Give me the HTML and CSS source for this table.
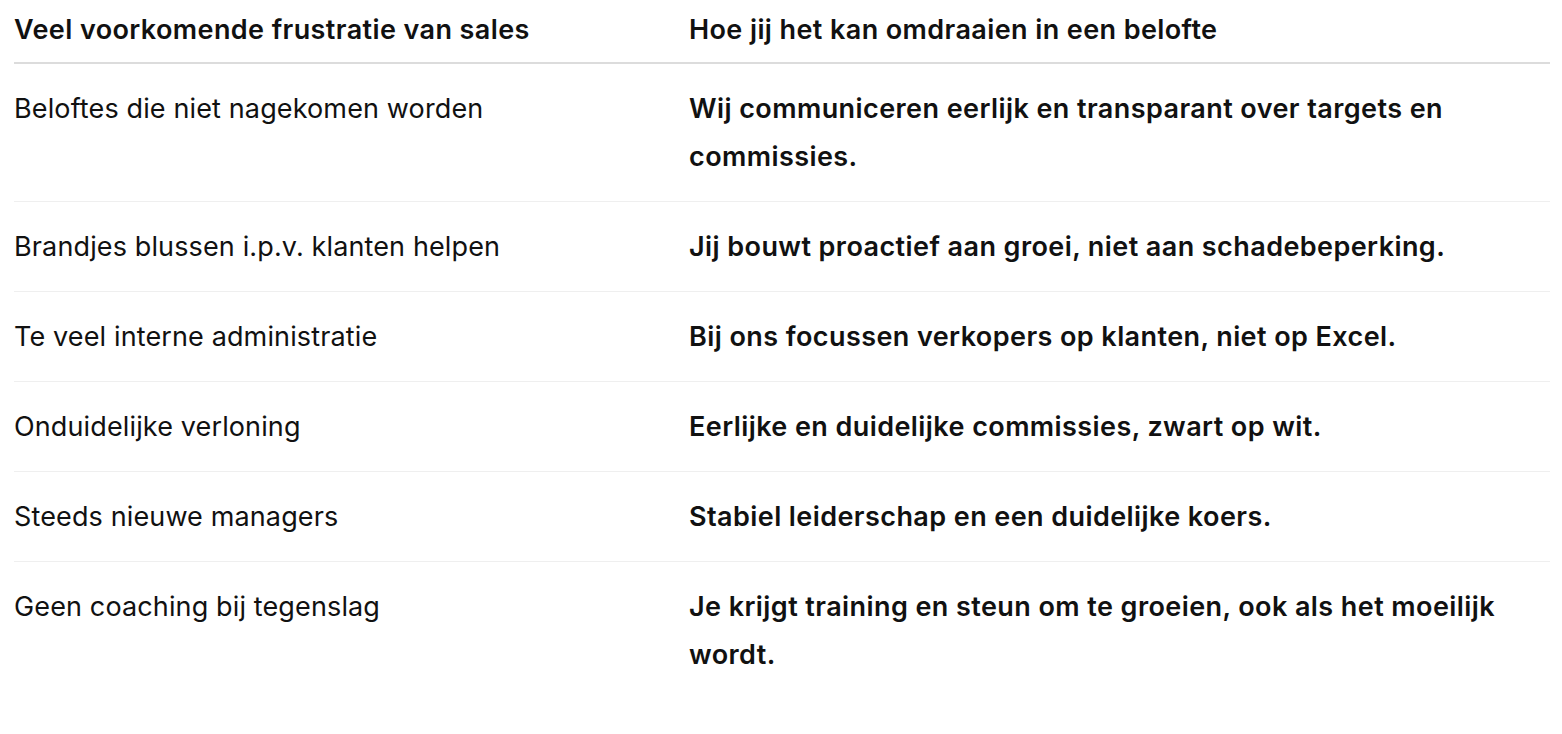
FILE: index.html
```html
<!DOCTYPE html>
<html lang="nl">
<head>
<meta charset="utf-8">
<title>Frustraties van sales</title>
<link rel="stylesheet" href="styles.css">
</head>
<body>
<table class="promise-table">
  <thead>
    <tr>
      <th>Veel voorkomende frustratie van sales</th>
      <th>Hoe jij het kan omdraaien in een belofte</th>
    </tr>
  </thead>
  <tbody>
    <tr>
      <td>Beloftes die niet nagekomen worden</td>
      <td class="promise">Wij communiceren eerlijk en transparant over targets en commissies.</td>
    </tr>
    <tr>
      <td>Brandjes blussen i.p.v. klanten helpen</td>
      <td class="promise">Jij bouwt proactief aan groei, niet aan schadebeperking.</td>
    </tr>
    <tr>
      <td>Te veel interne administratie</td>
      <td class="promise">Bij ons focussen verkopers op klanten, niet op Excel.</td>
    </tr>
    <tr>
      <td>Onduidelijke verloning</td>
      <td class="promise">Eerlijke en duidelijke commissies, zwart op wit.</td>
    </tr>
    <tr>
      <td>Steeds nieuwe managers</td>
      <td class="promise">Stabiel leiderschap en een duidelijke koers.</td>
    </tr>
    <tr class="last">
      <td>Geen coaching bij tegenslag</td>
      <td class="promise">Je krijgt training en steun om te groeien, ook als het moeilijk wordt.</td>
    </tr>
  </tbody>
</table>
</body>
</html>
```
FILE: styles.css
```css
html, body {
  margin: 0;
  padding: 0;
  background: #ffffff;
}

body {
  padding: 0 12px 0 14px;
  font-family: Inter, "Noto Sans", "Liberation Sans", sans-serif;
  font-size: 27px;
  letter-spacing: 0.13px;
  color: #111111;
}

.promise-table {
  width: 100%;
  border-collapse: collapse;
  table-layout: fixed;
}

.promise-table th {
  text-align: left;
  font-weight: 600;
  letter-spacing: 0.4px;
  line-height: 48px;
  padding: 6px 0 8px 0;
  border-bottom: 2px solid #dcdcdc;
  vertical-align: top;
}

.promise-table th:first-child,
.promise-table td:first-child {
  width: 675px;
}

.promise-table td {
  line-height: 48px;
  padding: 20.5px 0 20.5px 0;
  border-bottom: 1px solid #efefef;
  vertical-align: top;
}

.promise-table td.promise {
  font-weight: 600;
  letter-spacing: 0.42px;
}

.promise-table tr.last td {
  border-bottom: none;
}
```
